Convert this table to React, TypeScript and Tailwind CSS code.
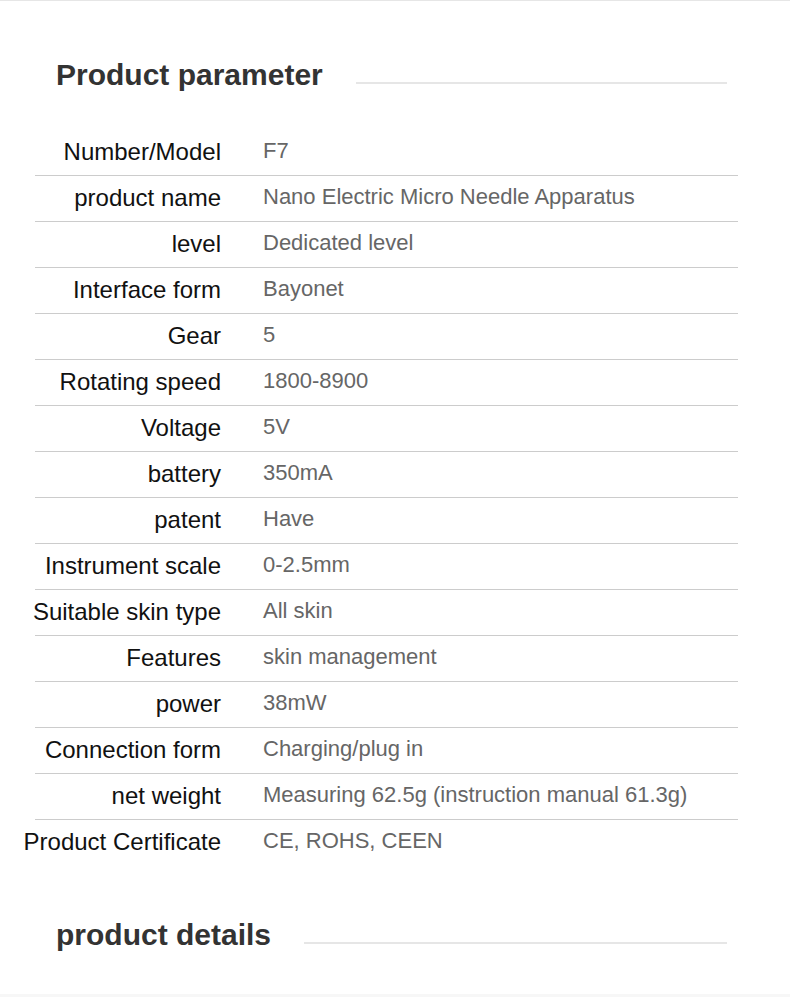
const params: [string, string][] = [
  ['Number/Model', 'F7'],
  ['product name', 'Nano Electric Micro Needle Apparatus'],
  ['level', 'Dedicated level'],
  ['Interface form', 'Bayonet'],
  ['Gear', '5'],
  ['Rotating speed', '1800-8900'],
  ['Voltage', '5V'],
  ['battery', '350mA'],
  ['patent', 'Have'],
  ['Instrument scale', '0-2.5mm'],
  ['Suitable skin type', 'All skin'],
  ['Features', 'skin management'],
  ['power', '38mW'],
  ['Connection form', 'Charging/plug in'],
  ['net weight', 'Measuring 62.5g (instruction manual 61.3g)'],
  ['Product Certificate', 'CE, ROHS, CEEN'],
]

function SectionTitle({ title, className = '' }: { title: string; className?: string }) {
  return (
    <div className={`ml-[56px] mr-[63px] flex items-start ${className}`}>
      <h2 className="whitespace-nowrap text-[30px] font-bold leading-[30px] text-[#333333]">{title}</h2>
      <div className="ml-[33px] mt-[22px] h-[2px] flex-1 bg-[#e6e6e6]" />
    </div>
  )
}

export default function App() {
  return (
    <div
      className="flex h-[997px] w-[790px] flex-col overflow-hidden border-t border-[#e6e6e6] bg-white"
      style={{ fontFamily: '"Liberation Sans", Arial, sans-serif' }}
    >
      <SectionTitle title="Product parameter" className="mt-[59px]" />

      <div className="ml-[35px] mt-[40px] w-[703px]">
        {params.map(([label, value], i) => (
          <div
            key={label}
            className={`flex h-[46px] items-start ${i < params.length - 1 ? 'border-b border-[#cccccc]' : ''}`}
          >
            <div className="flex w-[186px] shrink-0 justify-end whitespace-nowrap pt-[8px] text-[24px] leading-[28px] text-[#111111]">
              {label}
            </div>
            <div className="ml-[42px] whitespace-nowrap pt-[7px] text-[22px] leading-[28px] text-[#666666]">
              {value}
            </div>
          </div>
        ))}
      </div>

      <SectionTitle title="product details" className="mt-[54px]" />

      <div className="mt-auto h-[3px] bg-[#f7f7f7]" />
    </div>
  )
}
